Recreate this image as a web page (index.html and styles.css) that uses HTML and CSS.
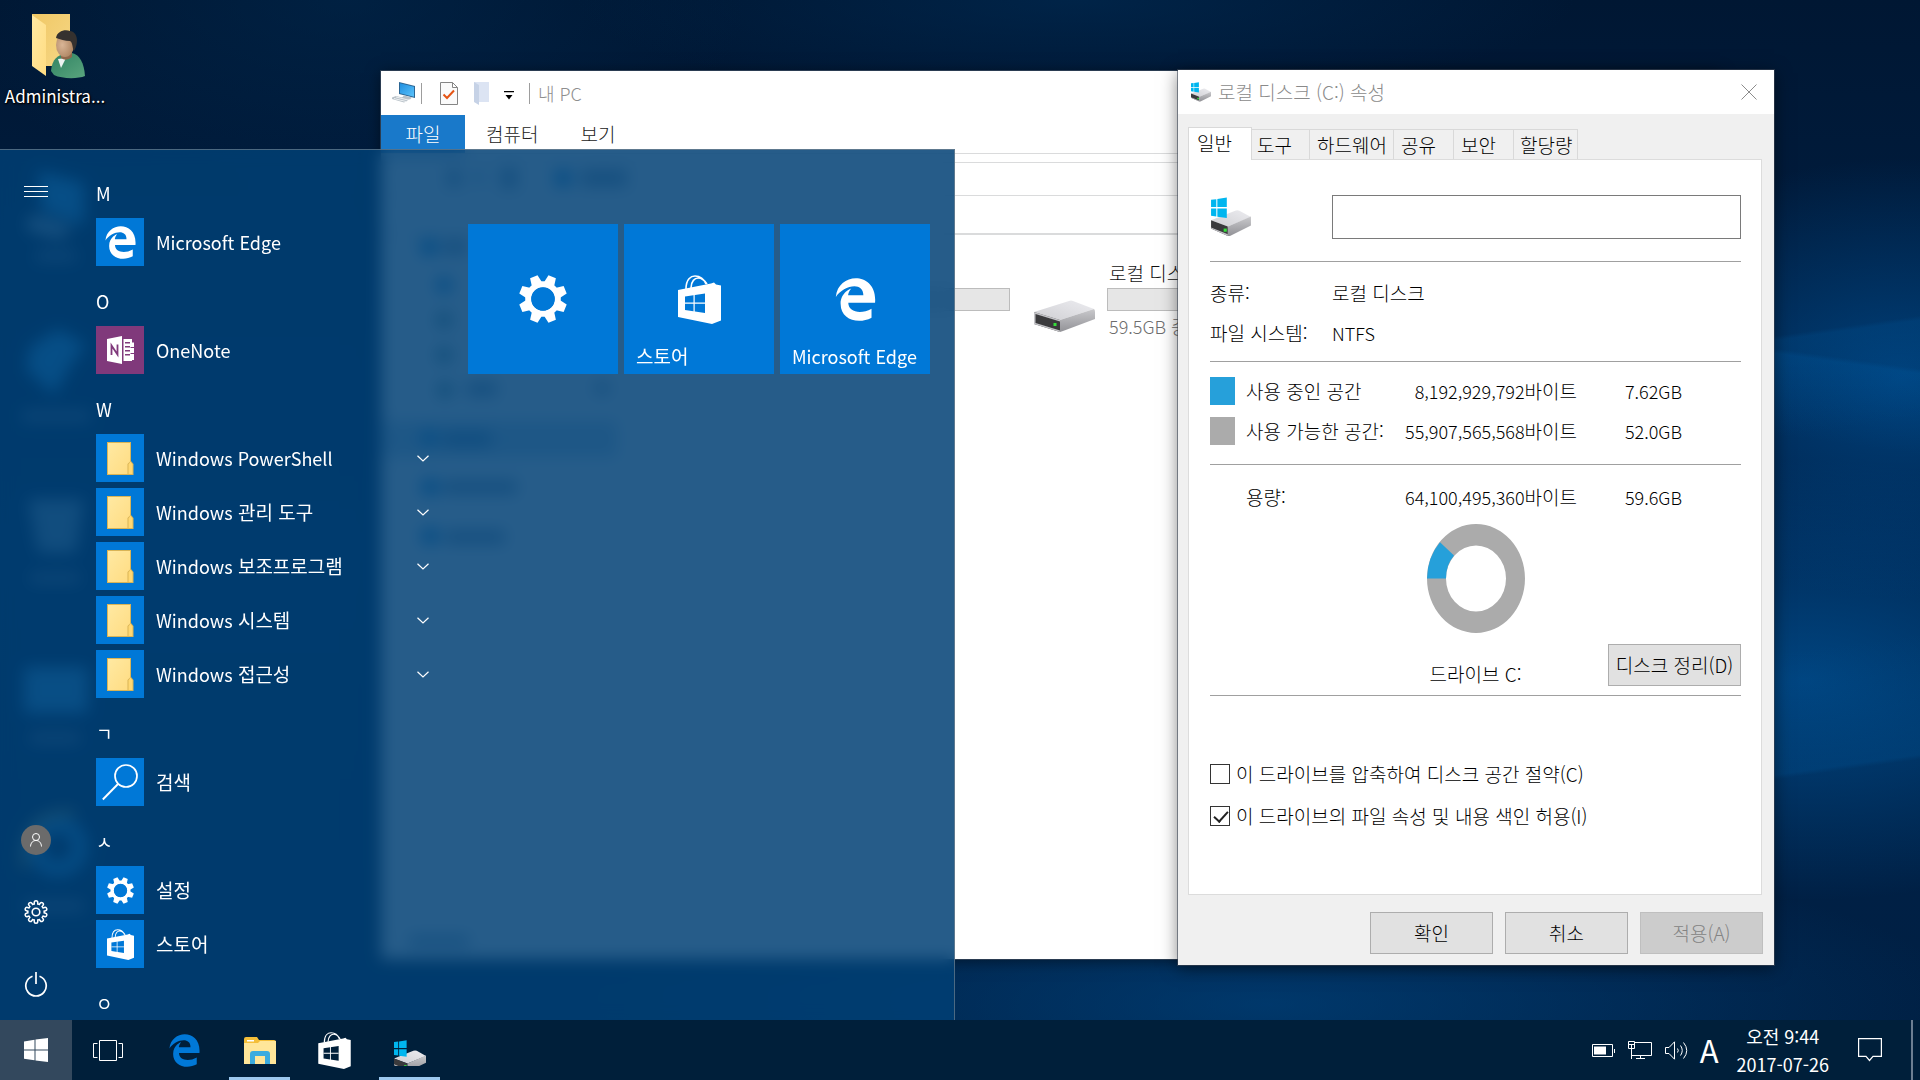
FILE: index.html
```html
<!DOCTYPE html>
<html lang="ko">
<head>
<meta charset="utf-8">
<title>Desktop</title>
<link rel="stylesheet" href="styles.css">
</head>
<body>
<svg class="sprite" aria-hidden="true">
  <defs>
    <linearGradient id="g-top" x1="0" y1="1" x2="1" y2="0"><stop offset="0" stop-color="#cfcfd3"/><stop offset="1" stop-color="#ececf0"/></linearGradient>
    <linearGradient id="g-side" x1="0" y1="0" x2="0" y2="1"><stop offset="0" stop-color="#c9c9cc"/><stop offset="1" stop-color="#929297"/></linearGradient>
    <linearGradient id="g-folder" x1="0" y1="0" x2="1" y2="1"><stop offset="0" stop-color="#ffe9a2"/><stop offset="1" stop-color="#ffdc82"/></linearGradient>
    <linearGradient id="g-screen" x1="0" y1="0" x2="1" y2="1"><stop offset="0" stop-color="#1f8fe0"/><stop offset="1" stop-color="#5cc3fb"/></linearGradient>
    <linearGradient id="g-back" x1="0" y1="0" x2="1" y2="1"><stop offset="0" stop-color="#f0c865"/><stop offset="1" stop-color="#f6d786"/></linearGradient>
    <radialGradient id="g-face" cx=".35" cy=".5" r=".7"><stop offset="0" stop-color="#d9b596"/><stop offset="1" stop-color="#a87e5b"/></radialGradient>
    <linearGradient id="g-body" x1="0" y1="0" x2="1" y2="1"><stop offset="0" stop-color="#2f8262"/><stop offset="1" stop-color="#5aa57e"/></linearGradient>
    <mask id="gear-cut">
      <g stroke="#fff" stroke-width="5" stroke-linecap="round">
        <path d="M12 12V2.5M12 12l5.6-7.7M12 12l9-2.9M12 12l9 2.9M12 12l5.6 7.7M12 12v9.5M12 12l-5.6 7.7M12 12l-9 2.9M12 12l-9-2.9M12 12L6.400 4.300"/>
      </g>
      <circle cx="12" cy="12" r="9" fill="#fff"/>
      <circle cx="12" cy="12" r="7.500" fill="#000"/>
      <path stroke="#000" stroke-width="2" stroke-linecap="round" d="M12 12V2.500M12 12l5.600-7.700M12 12l9-2.900M12 12l9 2.900M12 12l5.600 7.700M12 12v9.500M12 12l-5.600 7.700M12 12l-9 2.900M12 12l-9-2.900M12 12L6.400 4.300"/>
    </mask>
  </defs>
  <symbol id="i-edge" viewBox="0 0 24 24"><path fill="currentColor" d="M2.740 10.810C3.830-1.360 22.500-1.360 21.200 13.560H8.610C8.610 17.850 14.420 19.210 19.540 16.310V20.530C13.250 23.880 5 21.430 5 14.090C5 8.580 9.970 6.810 9.970 6.810C9.970 6.810 8.580 8.580 8.540 10.050H15.700C15.700 2.930 5.900 5.570 2.740 10.810Z"/></symbol>
  <symbol id="i-store" viewBox="0 0 43 49">
    <path fill="currentColor" fill-rule="evenodd" d="M0 15L33 8.500L36 7.500L38 9.500L43 10.500V45.500L34 49L0 42ZM7 21.500V35L27 38V18.500Z"/>
    <path fill="currentColor" d="M15.500 19.500h1.200v18h-1.200zM7 27.500h20v1.200h-20z"/>
    <path fill="none" stroke="currentColor" stroke-width="1.600" d="M8 14C8 4 13 1 17 1C22 1 26 4 28 9M13 13C13 6 17 3 20 3C24 3 27 6 29 9"/>
  </symbol>
  <symbol id="i-gear" viewBox="0 0 48 48">
    <g fill="currentColor">
      <path id="tooth" d="M18.500 8.500L20 0H28L29.500 8.500Z" transform="rotate(22.500 24 24)"/>
      <use href="#tooth" transform="rotate(45 24 24)"/><use href="#tooth" transform="rotate(90 24 24)"/><use href="#tooth" transform="rotate(135 24 24)"/><use href="#tooth" transform="rotate(180 24 24)"/><use href="#tooth" transform="rotate(225 24 24)"/><use href="#tooth" transform="rotate(270 24 24)"/><use href="#tooth" transform="rotate(315 24 24)"/>
    </g>
    <circle cx="24" cy="24" r="14.700" fill="none" stroke="currentColor" stroke-width="6.200"/>
    <circle cx="24" cy="24" r="11.800" fill="#0078d7"/>
  </symbol>
  <symbol id="i-drive" viewBox="0 0 62 32">
    <path fill="url(#g-top)" d="M1 12L36 1Q38 0 40 1L61 9L27 20Z"/>
    <path fill="#3a3a3c" d="M1 12L27 20V32L1 24Z"/>
    <path fill="#c4c4c8" d="M1 12L27 20V21.500L2.500 14V24.500L1 24ZM1 22.500L27 30.500V32L1 24Z"/>
    <path fill="url(#g-side)" d="M27 20L61 9Q62 10 62 12V19L30 31L27 32Z"/>
    <rect x="20.500" y="23" width="3" height="3" fill="#35e03a"/>
  </symbol>
  <symbol id="i-osdrive" viewBox="0 0 40 38">
    <path fill="url(#g-top)" d="M1 22L24 13Q26 12 28 13L39 19L17 28Z"/>
    <path fill="#3a3a3c" d="M1 22L17 28V37L1 30Z"/>
    <path fill="#c4c4c8" d="M1 29L17 35.500V37L1 30Z"/>
    <path fill="url(#g-side)" d="M17 28L39 18.500V27L19 37L17 37Z"/>
    <rect x="13" y="30" width="3" height="3" fill="#35e03a"/>
    <path fill="#00b6ef" d="M1 2.500L6 2V9.500H1ZM7 1.800L16 .5V9.500H7ZM1 11H6V18.500L1 17.800ZM7 11H16V20L7 18.700Z"/>
  </symbol>
  <symbol id="i-folder" viewBox="0 0 27 33">
    <path fill="#d9b456" d="M0 0H24V19L26.500 22V33H0Z"/>
    <path fill="url(#g-folder)" d="M1 1H23V19.500L20.500 22V32H1Z"/>
    <path fill="#ffd873" d="M21.500 22.500L23.500 19.500L25.500 22.500V32H21.500Z"/>
  </symbol>
  <symbol id="i-win" viewBox="0 0 24 24"><path fill="currentColor" d="M0 3.500L10.500 1.800V11.400H0ZM11.500 1.600L24 0V11.400H11.500ZM0 12.500H10.500V22.300L0 20.800ZM11.500 12.500H24V24L11.500 22.500Z"/></symbol>
  <symbol id="i-chevron" viewBox="0 0 12 7"><path fill="none" stroke="currentColor" stroke-width="1.200" d="M.5.700L6 6L11.500.700"/></symbol>
</svg>

<div class="desktop">
  <main class="workspace">
    <a class="shortcut" href="#">
      <svg class="shortcut-icon" viewBox="0 0 54 65" aria-hidden="true">
        <path fill="url(#g-back)" d="M0 0H38V52H0Z"/>
        <path fill="url(#g-folder)" d="M0 1L14 11V62L0 52Z"/>
        <path fill="url(#g-body)" d="M19 57C20 45 26 41 32 40L40 39C48 41 52 49 53 62C46 65 30 65 22 61Z"/>
        <path fill="#eef3f2" d="M26 45L34 44L29 54Z"/>
        <path fill="#8f684b" d="M29 36H40V43Q34 48 29 44Z"/>
        <ellipse cx="33" cy="31" rx="9" ry="12" fill="url(#g-face)"/>
        <path fill="#35312f" d="M24 24C25 17 33 15 38 17C46 18 47 29 42 37C40 33 41 29 38 27C33 27 28 25 24 24Z"/>
      </svg>
      <span class="shortcut-name">Administra...</span>
    </a>

    <svg class="desk-icons" width="100" height="780" aria-hidden="true">
      <path fill="#2c9fe8" d="M38 22L84 34V76L42 62Z"/><path fill="#9ab4c8" d="M30 66L74 78L60 90L26 80Z"/>
      <rect x="36" y="102" width="40" height="10" fill="#5d7590"/>
      <path fill="#2c9fe8" d="M30 198L58 180L86 196L72 214L54 246L26 220Z"/>
      <rect x="22" y="262" width="68" height="10" fill="#5d7590"/>
      <path fill="#7398b4" d="M28 350H84L76 404H38Z"/>
      <rect x="30" y="424" width="50" height="10" fill="#5d7590"/>
      <rect x="24" y="518" width="64" height="46" fill="#3a9fe0"/>
      <rect x="30" y="584" width="50" height="10" fill="#5d7590"/>
      <circle cx="58" cy="698" r="22" fill="none" stroke="#2490d8" stroke-width="16"/>
      <path fill="none" stroke="#9a9a50" stroke-width="7" d="M24 720Q20 660 76 664"/>
      <rect x="24" y="752" width="60" height="10" fill="#5d7590"/>
    </svg>

    <section class="explorer" aria-label="내 PC">
      <header class="explorer-title">
        <svg width="24" height="22" viewBox="0 0 24 22" aria-hidden="true">
          <path fill="#2b6593" d="M7 0L23 4V16L7 12Z"/><path fill="url(#g-screen)" d="M8 1.300L22 4.800V14.700L8 11.200Z"/>
          <path fill="#b9c2c9" d="M12 13.500L20 15.500L18 17.500L10 15.500ZM0 15.500L4 14L17 17L15 19L12 20.500L0 17Z"/><path stroke="#eef1f3" fill="none" d="M2 16.500L14 19.500M4 15L16 18"/>
        </svg>
        <span class="sep"></span>
        <svg class="qa" width="18" height="23" viewBox="0 0 18 23" aria-hidden="true"><path fill="#fafafa" stroke="#858585" d="M.500.500H12.500L17.500 5.500V22.500H.500ZM12.500.500V5.500H17.500"/><path fill="none" stroke="#e55414" stroke-width="2" d="M3.500 12.500L7 16L14 8.500"/></svg>
        <svg class="qa2" width="15" height="23" viewBox="0 0 15 23" aria-hidden="true"><path fill="#dce4f3" d="M0 0H15V20H4Z"/><path fill="#c6d2e6" d="M0 0L5 3V23L0 20Z"/></svg>
        <svg class="qa3" width="10" height="9" viewBox="0 0 10 9" aria-hidden="true"><path d="M0 0H10V1.300H0ZM1.500 4H8.500L5 8.500Z"/></svg>
        <span class="sep"></span>
        <span class="explorer-name">내 PC</span>
      </header>
      <nav class="ribbon">
        <button class="ribbon-file" type="button">파일</button>
        <button type="button">컴퓨터</button>
        <button type="button">보기</button>
      </nav>
      <div class="bar bar-a"></div>
      <div class="bar bar-b"></div>
      <div class="bar bar-c"></div>
      <div class="drives">
        <div class="meter meter-left"></div>
        <svg class="drive-icon" width="62" height="32" aria-hidden="true"><use href="#i-drive"/></svg>
        <div class="drive-info">
          <span>로컬 디스크</span>
          <div class="meter"></div>
          <span class="muted">59.5GB 중</span>
        </div>
      </div>
      <svg class="nav-shapes" width="270" height="800" aria-hidden="true">
        <g fill="#8fa6ba"><rect x="66" y="10" width="14" height="16"/><rect x="94" y="12" width="8" height="10"/><rect x="120" y="8" width="16" height="20"/><rect x="200" y="10" width="46" height="16"/>
        <rect x="62" y="80" width="24" height="14"/><rect x="86" y="222" width="30" height="14"/><rect x="214" y="222" width="14" height="12"/><rect x="62" y="320" width="74" height="14"/><rect x="64" y="370" width="60" height="14"/><rect x="28" y="776" width="60" height="10"/></g>
        <rect y="261" width="236" height="36" fill="#c4dae9"/><rect x="62" y="272" width="48" height="14" fill="#6a98bd"/>
        <g fill="#2b94d8"><circle cx="182" cy="18" r="9"/><circle cx="48" cy="87" r="9"/><circle cx="63" cy="125" r="8"/><circle cx="48" cy="278" r="8"/><circle cx="49" cy="327" r="9"/><circle cx="49" cy="376" r="9"/></g>
        <g fill="#6d9c9a"><circle cx="63" cy="160" r="8"/><circle cx="63" cy="195" r="8"/><circle cx="64" cy="230" r="8"/></g>
      </svg>
    </section>

    <section class="dialog" aria-label="로컬 디스크 (C:) 속성">
      <header class="dialog-title">
        <svg width="22" height="20" aria-hidden="true"><use href="#i-osdrive"/></svg>
        <span class="dialog-name">로컬 디스크 (C:) 속성</span>
        <button class="close" type="button" aria-label="닫기"><svg width="16" height="16" viewBox="0 0 16 16"><path fill="none" stroke="#8c8c8c" d="M.500.500L15.500 15.500M15.500.500L.500 15.500"/></svg></button>
      </header>
      <div class="dialog-body">
        <div class="tabs" role="tablist">
          <button class="tab tab-on" role="tab" aria-selected="true" type="button">일반</button>
          <button class="tab" role="tab" type="button">도구</button>
          <button class="tab tab-wide" role="tab" type="button">하드웨어</button>
          <button class="tab" role="tab" type="button">공유</button>
          <button class="tab" role="tab" type="button">보안</button>
          <button class="tab tab-end" role="tab" type="button">할당량</button>
        </div>
        <div class="panel">
          <div class="label-row">
            <svg width="42" height="40" aria-hidden="true"><use href="#i-osdrive"/></svg>
            <input class="volume" type="text" aria-label="볼륨 이름">
          </div>
          <hr>
          <table class="facts">
            <tr><th scope="row">종류:</th><td>로컬 디스크</td></tr>
            <tr><th scope="row">파일 시스템:</th><td class="latin">NTFS</td></tr>
          </table>
          <hr>
          <table class="usage">
            <colgroup><col class="c-swatch"><col class="c-name"><col class="c-bytes"><col class="c-size"></colgroup>
            <tr><td><span class="swatch used"></span></td><th scope="row">사용 중인 공간</th><td><span class="latin">8,192,929,792</span>바이트</td><td class="latin">7.62GB</td></tr>
            <tr><td><span class="swatch free"></span></td><th scope="row">사용 가능한 공간:</th><td><span class="latin">55,907,565,568</span>바이트</td><td class="latin">52.0GB</td></tr>
          </table>
          <hr>
          <table class="usage total">
            <colgroup><col class="c-swatch"><col class="c-name"><col class="c-bytes"><col class="c-size"></colgroup>
            <tr><td></td><th scope="row">용량:</th><td><span class="latin">64,100,495,360</span>바이트</td><td class="latin">59.6GB</td></tr>
          </table>
          <div class="chart-row">
            <figure class="chart">
              <svg width="98" height="109" viewBox="0 0 98 109" aria-hidden="true">
                <path fill="#ababab" fill-rule="evenodd" d="M49 0A49 54.500 0 0 1 49 109A49 54.500 0 0 1 49 0ZM49 21.500A30 33 0 0 0 49 87.500A30 33 0 0 0 49 21.500Z"/>
                <path fill="#26a0da" d="M0 54.500A49 54.500 0 0 1 13 18.300L27 31.500A30 33 0 0 0 19 54.500Z"/>
              </svg>
              <figcaption>드라이브 C:</figcaption>
            </figure>
            <button class="btn cleanup" type="button">디스크 정리(D)</button>
          </div>
          <hr>
          <div class="checks">
            <label><input type="checkbox"><span>이 드라이브를 압축하여 디스크 공간 절약(C)</span></label>
            <label><input type="checkbox" checked><span>이 드라이브의 파일 속성 및 내용 색인 허용(I)</span></label>
          </div>
        </div>
        <footer class="actions">
          <button class="btn" type="button">확인</button>
          <button class="btn" type="button">취소</button>
          <button class="btn" type="button" disabled>적용(A)</button>
        </footer>
      </div>
    </section>

    <section class="start" aria-label="시작">
      <nav class="rail">
        <button type="button" aria-label="메뉴"><svg width="24" height="12" viewBox="0 0 24 12"><path fill="#fff" d="M0 0H24V1H0ZM0 5H24V6H0ZM0 10H24V11H0Z"/></svg></button>
        <button class="rail-push" type="button" aria-label="계정"><svg width="30" height="30" viewBox="0 0 30 30"><circle cx="15" cy="15" r="15" fill="#6b6b6b"/><g fill="none" stroke="#fff"><circle cx="15" cy="12" r="3.500"/><path d="M9.500 21.500C9.800 17.500 12 15.500 15 15.500S20.200 17.500 20.500 21.500"/></g></svg></button>
        <button type="button" aria-label="설정"><svg width="24" height="24" viewBox="0 0 24 24"><rect width="24" height="24" fill="#fff" mask="url(#gear-cut)"/><circle cx="12" cy="12" r="3.800" fill="none" stroke="#fff" stroke-width="1.600"/></svg></button>
        <button type="button" aria-label="전원"><svg width="24" height="26" viewBox="0 0 24 26"><path fill="none" stroke="#fff" stroke-width="1.700" d="M12 1V13M8.500 5.200A10.200 10.200 0 1 0 15.500 5.200"/></svg></button>
      </nav>
      <div class="apps">
        <h2>M</h2>
        <a class="latin" href="#"><span class="app-icon"><svg width="39" height="39"><use href="#i-edge"/></svg></span>Microsoft Edge</a>
        <h2>O</h2>
        <a class="latin" href="#"><span class="app-icon onenote"><svg width="27" height="28" viewBox="0 0 27 28"><path fill="#fff" d="M0 3L15 0V28L0 25ZM16.500 3H25V6.500H27V24H25V25H16.500ZM18 6V7.500H23V6ZM18 10V11.500H23V10ZM18 14V15.500H23V14ZM18 18V19.500H23V18Z"/><path fill="none" stroke="#80397b" stroke-width="1.800" d="M4.500 19V9.500L10.500 18.500V8.500"/><path stroke="#80397b" d="M23.500 11.500H27M23.500 17.500H27"/></svg></span>OneNote</a>
        <h2>W</h2>
        <a class="latin" href="#"><span class="app-icon"><svg width="27" height="33"><use href="#i-folder"/></svg></span>Windows PowerShell<svg class="chev" width="12" height="7"><use href="#i-chevron"/></svg></a>
        <a href="#"><span class="app-icon"><svg width="27" height="33"><use href="#i-folder"/></svg></span><span><span class="latin">Windows</span> 관리 도구</span><svg class="chev" width="12" height="7"><use href="#i-chevron"/></svg></a>
        <a href="#"><span class="app-icon"><svg width="27" height="33"><use href="#i-folder"/></svg></span><span><span class="latin">Windows</span> 보조프로그램</span><svg class="chev" width="12" height="7"><use href="#i-chevron"/></svg></a>
        <a href="#"><span class="app-icon"><svg width="27" height="33"><use href="#i-folder"/></svg></span><span><span class="latin">Windows</span> 시스템</span><svg class="chev" width="12" height="7"><use href="#i-chevron"/></svg></a>
        <a href="#"><span class="app-icon"><svg width="27" height="33"><use href="#i-folder"/></svg></span><span><span class="latin">Windows</span> 접근성</span><svg class="chev" width="12" height="7"><use href="#i-chevron"/></svg></a>
        <h2>ㄱ</h2>
        <a href="#"><span class="app-icon"><svg width="36" height="38" viewBox="0 0 36 38"><circle cx="24" cy="13" r="11" fill="none" stroke="#fff" stroke-width="1.700"/><path stroke="#fff" stroke-width="1.900" d="M16 21L.800 36.500"/></svg></span>검색</a>
        <h2>ㅅ</h2>
        <a href="#"><span class="app-icon"><svg width="27" height="27"><use href="#i-gear"/></svg></span>설정</a>
        <a href="#"><span class="app-icon"><svg width="27" height="31"><use href="#i-store"/></svg></span>스토어</a>
        <h2>ㅇ</h2>
      </div>
      <div class="tiles">
        <a class="tile" href="#" aria-label="설정"><svg width="48" height="48"><use href="#i-gear"/></svg></a>
        <a class="tile" href="#"><svg width="43" height="49"><use href="#i-store"/></svg><span class="tile-name">스토어</span></a>
        <a class="tile" href="#"><svg width="51" height="51"><use href="#i-edge"/></svg><span class="tile-name latin">Microsoft Edge</span></a>
      </div>
    </section>
  </main>

  <footer class="taskbar">
    <button class="task task-start" type="button" aria-label="시작"><svg width="24" height="24"><use href="#i-win"/></svg></button>
    <button class="task task-view" type="button" aria-label="작업 보기"><svg width="30" height="21" viewBox="0 0 30 21"><path fill="none" stroke="#fff" d="M6.500.500H23.500V20.500H6.500ZM4.500 3.500H.500V17.500H4.500M25.500 3.500H29.500V17.500H25.500"/></svg></button>
    <button class="task task-edge" type="button" aria-label="Microsoft Edge"><svg width="39" height="39"><use href="#i-edge"/></svg></button>
    <button class="task task-open" type="button" aria-label="파일 탐색기"><svg width="32" height="27" viewBox="0 0 32 27"><path fill="#f4bf3a" d="M0 2Q0 0 2 0H13L15 3H30Q32 3 32 5V8H0Z"/><path fill="#fff" d="M3 3H10V4.500H3Z"/><path fill="#ffe699" d="M0 6H14L16 4H32V27H0Z"/><path fill="#3bacdf" d="M6 27V17Q6 14 9 14H23Q26 14 26 17V27H21V19H11V27Z"/></svg></button>
    <button class="task" type="button" aria-label="스토어"><svg width="33" height="37"><use href="#i-store"/></svg></button>
    <button class="task task-open" type="button" aria-label="로컬 디스크"><svg width="34" height="32" viewBox="0 -7 40 38"><use href="#i-osdrive" width="40" height="38"/></svg></button>
    <div class="tray">
      <svg width="23" height="13" viewBox="0 0 23 13" aria-hidden="true"><path fill="none" stroke="#fff" d="M.500.500H20.500V12.500H.500ZM22.500 5V9"/><path fill="#fff" d="M2 2.500H14V10.500H2Z"/></svg>
      <svg width="24" height="19" viewBox="0 0 24 19" aria-hidden="true"><path fill="none" stroke="#fff" d="M7 1.500H23.500V14.500H4M.500.500H6.500V7.500H.500ZM.500 3.500H6.500M3.500 3.500V18M8 17.500H17M12.500 14.500V17.500"/></svg>
      <svg width="23" height="19" viewBox="0 0 23 19" aria-hidden="true"><path fill="none" stroke="#fff" d="M.500 6.500H4L9.500.800V18.200L4 12.500H.500ZM12.500 7.500Q14 9.500 12.500 11.500M15.500 4.500Q19 9.500 15.500 14.500M18.500 1.500Q25 9.500 18.500 17.500"/></svg>
      <span class="ime">A</span>
      <time class="clock" datetime="2017-07-26T09:44"><span>오전 9:44</span><span>2017-07-26</span></time>
      <svg class="note" width="24" height="24" viewBox="0 0 24 24" aria-hidden="true"><path fill="none" stroke="#fff" stroke-width="1.200" d="M.600.600H23.400V18.400H15L11.500 22.500L8 18.400H.600Z"/></svg>
    </div>
  </footer>
</div>
</body>
</html>
```
FILE: styles.css
```css
* { box-sizing: border-box; }

body {
  margin: 0;
  font-family: "Noto Sans CJK KR", sans-serif;
  font-size: 19px;
  line-height: 24px;
}

button { font: inherit; color: inherit; padding: 0; border: 0; background: none; }
a { color: inherit; text-decoration: none; }
svg { display: block; flex: none; }

.sprite { position: absolute; width: 0; height: 0; }
.latin { font-size: 18px; }

/* desktop */
.desktop {
  display: flex;
  flex-direction: column;
  height: 100vh;
  overflow: hidden;
  background:
    linear-gradient(188deg, transparent 49%, rgba(0, 96, 170, .22) 50%, transparent 66%) right 120px / 12% 44% no-repeat,
    linear-gradient(172deg, transparent 34%, rgba(0, 90, 160, .2) 35%, transparent 56%) right 190px / 12% 40% no-repeat,
    linear-gradient(-8deg, transparent 40%, rgba(0, 90, 160, .22) 41%, transparent 66%) right 500px / 12% 42% no-repeat,
    radial-gradient(320px 220px at 99% 35%, rgba(0, 90, 165, .55), transparent),
    radial-gradient(420px 220px at 94% 63%, rgba(0, 92, 165, .6), transparent),
    radial-gradient(700px 160px at 66% 93%, rgba(0, 76, 140, .55), transparent),
    radial-gradient(500px 100px at 56% 0%, rgba(0, 48, 92, .5), transparent),
    radial-gradient(400px 200px at 18% 0%, rgba(0, 44, 84, .45), transparent),
    linear-gradient(#001733, #00224a 50%, #001f42);
}

.workspace { position: relative; flex: 1; min-height: 0; }

.shortcut {
  display: flex;
  flex-direction: column;
  align-items: center;
  width: 110px;
  padding-top: 14px;
  gap: 5px;
  color: #fff;
  text-shadow: 0 1px 3px #000, 1px 1px 1px #000;
}
.shortcut-icon { width: 54px; height: 65px; margin-left: 8px; }
.shortcut-name { font-size: 17px; }

.desk-icons { position: absolute; left: 0; top: 149px; }

/* file explorer window */
.explorer {
  position: absolute;
  left: 381px;
  top: 71px;
  right: 200px;
  bottom: 61px;
  background: #fff;
  box-shadow: 0 0 0 1px #2b3d52, 0 2px 14px rgba(0, 0, 0, .5);
  font-weight: 300;
}
.explorer-title { display: flex; align-items: center; height: 44px; padding-left: 11px; color: #8e8e8e; }
.explorer-title .sep { width: 1px; height: 21px; margin-left: 5px; background: #9d9d9d; }
.explorer-title .qa { margin-left: 18px; }
.explorer-title .qa2 { margin-left: 16px; }
.explorer-title .qa3 { margin: 4px 10px 0 15px; }
.explorer-name { margin-left: 8px; font-size: 18px; }
.ribbon { display: flex; height: 39px; border-bottom: 1px solid #dadbdc; }
.ribbon button { color: #222; }
.ribbon .ribbon-file { width: 84px; background: #1979ca; color: #fff; }
.ribbon button + button { padding: 0 21px; }
.bar { border-bottom: 1px solid #dadbdc; }
.bar-a { height: 9px; }
.bar-b { height: 33px; }
.bar-c { height: 39px; border-bottom-width: 2px; }
.drives { display: flex; align-items: center; margin-top: 26px; padding-left: 429px; color: #111; }
.meter { height: 23px; border: 1px solid #bcbcbc; background: #e6e6e6; }
.meter-left { width: 200px; }
.drive-icon { margin: 32px 12px 0 23px; }
.drive-info { display: flex; flex-direction: column; gap: 3px; width: 220px; }
.drive-info span { padding-left: 2px; }
.drive-info .muted { color: #6d6d6d; font-size: 18px; }
.nav-shapes { position: absolute; left: 0; top: 89px; }

/* drive properties window */
.dialog {
  position: absolute;
  right: 146px;
  top: 70px;
  width: 596px;
  background: #f0f0f0;
  box-shadow: 0 0 0 1px rgba(60, 70, 85, .6), 0 3px 16px rgba(0, 0, 0, .5);
  color: #000;
  font-weight: 300;
}
.dialog-title { display: flex; align-items: center; height: 44px; padding: 0 17px 0 12px; background: #fff; color: #8a8a8a; }
.dialog-name { flex: 1; margin-left: 6px; }
.dialog-body { padding: 13px 11px 11px 10px; }
.tabs { display: flex; align-items: flex-end; }
.tab {
  width: 60px;
  height: 30px;
  padding: 0 0 0 7px;
  text-align: left;
  white-space: nowrap;
  border: 1px solid #d9d9d9;
  border-width: 1px 1px 0 0;
}
.tab-on {
  position: relative;
  z-index: 1;
  width: 64px;
  height: 33px;
  margin-bottom: -1px;
  padding: 0 0 2px 8px;
  border-left-width: 1px;
  background: #fff;
}
.tab-on + .tab { width: 58px; padding-left: 5px; }
.tab-wide { width: 84px; }
.tab-end { width: 64px; padding-left: 6px; }
.panel { padding: 35px 20px 57px 21px; margin-right: 1px; border: 1px solid #dcdcdc; background: #fff; }
.label-row { display: flex; align-items: center; gap: 80px; }
.volume { flex: 1; min-width: 0; height: 44px; border: 1px solid #7a7a7a; background: #fff; padding: 0 8px; font: inherit; }
hr { height: 1px; margin: 0; border: 0; background: #a0a0a0; }
.label-row + hr { margin-top: 22px; }

table { border-collapse: collapse; table-layout: fixed; white-space: nowrap; }
th, td { height: 40px; padding: 0; text-align: left; font-weight: 300; }
.facts { margin: 11px 0 8px; }
.facts th { width: 122px; }
.usage { width: 472px; margin: 9px 0 13px; }
.usage.total { margin: 12px 0 7px; }
.c-swatch { width: 36px; }
.c-name { width: 146px; }
.c-bytes { width: 185px; }
.c-size { width: 105px; }
.usage td:nth-child(n + 3) { text-align: right; }
.swatch { display: block; width: 25px; height: 28px; }
.used { background: #26a0da; }
.free { background: #ababab; }

.chart-row { display: grid; grid-template-columns: 1fr auto 1fr; align-items: end; margin-bottom: 9px; }
.chart { grid-column: 2; display: flex; flex-direction: column; align-items: center; gap: 29px; margin: 0; }
.chart-row .cleanup { justify-self: end; width: 133px; }

.btn { width: 123px; height: 42px; border: 1px solid #adadad; background: #e1e1e1; white-space: nowrap; }
.btn:disabled { border-color: #bfbfbf; background: #ccc; color: #838383; }
.actions { display: flex; justify-content: flex-end; gap: 12px; margin-top: 17px; }

.checks { display: flex; flex-direction: column; margin-top: 57px; }
.checks label { display: flex; align-items: center; gap: 6px; height: 42px; }
.checks input {
  appearance: none;
  position: relative;
  width: 20px;
  height: 20px;
  margin: 0;
  border: 1px solid #333;
  background: #fff;
}
.checks input:checked::after {
  content: "";
  position: absolute;
  left: 6px;
  top: 1px;
  width: 6px;
  height: 12px;
  border: solid #222;
  border-width: 0 2px 2px 0;
  transform: rotate(42deg);
}

/* start menu */
.start {
  position: absolute;
  left: 0;
  top: 149px;
  bottom: 0;
  width: 955px;
  display: flex;
  overflow: hidden;
  color: #fff;
  background: rgba(0, 64, 116, .85);
  backdrop-filter: blur(8px);
  border: 1px solid rgba(150, 150, 150, .5);
  border-width: 1px 1px 0 0;
}
.rail { display: flex; flex-direction: column; width: 72px; padding-top: 6px; }
.rail button { display: grid; place-items: center; height: 72px; }
.rail .rail-push { margin-top: auto; }
.apps { display: flex; flex-direction: column; gap: 6px; width: 357px; padding: 14px 0 0 24px; }
.apps h2 { flex: none; height: 48px; margin: 0; padding-top: 17px; font-size: 18px; font-weight: 400; }
.apps a { flex: none; display: flex; align-items: center; height: 48px; }
.app-icon { display: grid; place-items: center; width: 48px; height: 48px; margin-right: 12px; background: #0078d7; }
.onenote { background: #80397b; }
.chev { margin-left: auto; }
.tiles { display: flex; align-items: flex-start; gap: 6px; padding: 74px 0 0 39px; }
.tile { position: relative; display: grid; place-items: center; width: 150px; height: 150px; background: #0078d7; }
.tile-name { position: absolute; left: 12px; bottom: 6px; white-space: nowrap; }

/* taskbar */
.taskbar { display: flex; height: 60px; color: #fff; background: #001f3a; }
.task { display: grid; place-items: center; width: 75px; }
.task-start { width: 72px; background: #33485d; }
.task-view { width: 72px; margin-right: 3px; }
.task-edge { color: #0078d7; }
.task-open { background: linear-gradient(#9dc8ee, #9dc8ee) center bottom / 61px 3px no-repeat; }
.tray { display: flex; align-items: center; margin-left: auto; padding-right: 29px; border-right: 2px solid #6d7f92; margin-right: 7px; }
.tray svg + svg { margin-left: 13px; }
.ime { margin-left: 12px; font-size: 31px; line-height: 60px; }
.clock { display: flex; flex-direction: column; align-items: center; gap: 4px; margin: 0 29px 0 18px; font-size: 18px; }
```
